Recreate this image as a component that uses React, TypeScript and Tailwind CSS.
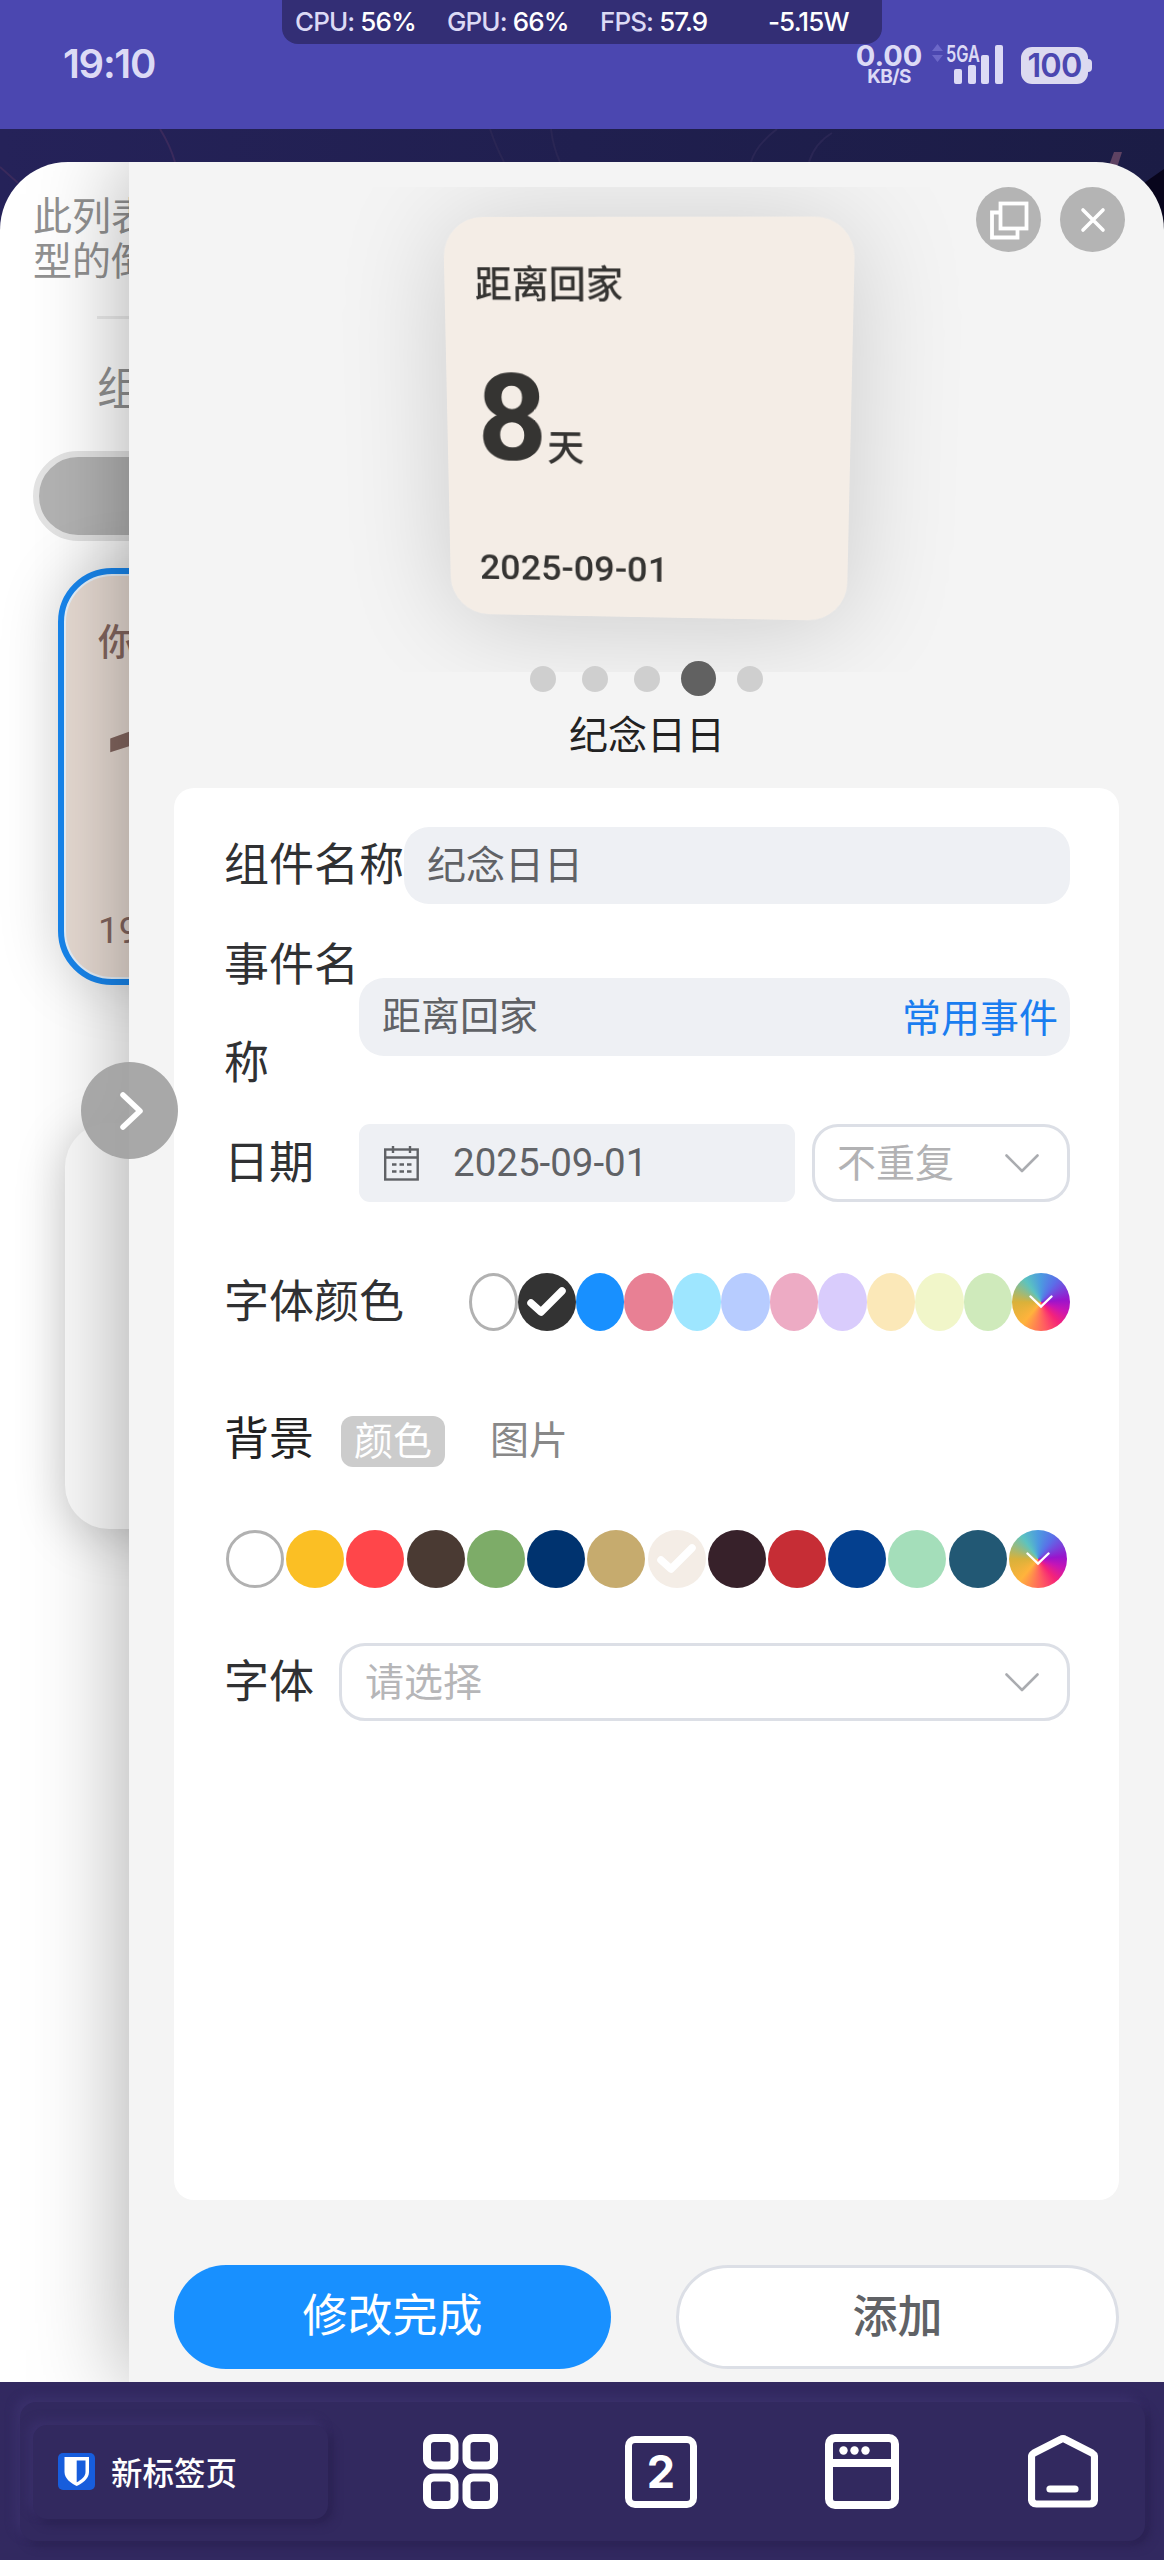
import React from "react";
import clsx from "clsx";

const fontColors = [
  { color: "#ffffff", outlined: true },
  { color: "#333333", checked: true },
  { color: "#1890ff" },
  { color: "#e88094" },
  { color: "#9ee6ff" },
  { color: "#b7ccff" },
  { color: "#edabc4" },
  { color: "#d9ccfc" },
  { color: "#fbe8b8" },
  { color: "#f1f6c9" },
  { color: "#cfeabb" },
];

const backgroundColors = [
  { color: "#ffffff", outlined: true },
  { color: "#fbbf24" },
  { color: "#ff464a" },
  { color: "#4a3a33" },
  { color: "#7dac68" },
  { color: "#00336f" },
  { color: "#c6ab6e" },
  { color: "#f4ede6", checked: true },
  { color: "#37212a" },
  { color: "#c62d35" },
  { color: "#04408f" },
  { color: "#a4deba" },
  { color: "#225874" },
];

interface SwatchProps {
  color: string;
  outlined?: boolean;
  checked?: boolean;
  className?: string;
}

const Swatch: React.FC<SwatchProps> = ({ color, outlined, checked, className }) => (
  <button
    className={clsx(
      "flex h-[58px] items-center justify-center rounded-[50%]",
      outlined && "border-[3px] border-[#b1b1b1]",
      className
    )}
    style={{ backgroundColor: color }}
  >
    {checked && (
      <svg className="h-[32px] w-[42px]" viewBox="0 0 42 32" fill="none">
        <path d="M5 17 L15 26 L36 5" stroke="#fff" strokeWidth="7.5" strokeLinecap="round" strokeLinejoin="round" />
      </svg>
    )}
  </button>
);

const RainbowSwatch: React.FC = () => (
  <button className="flex size-[58px] shrink-0 items-center justify-center rounded-full bg-[conic-gradient(#4c9ae0_0deg,#5b6ee8_35deg,#9a14cc_85deg,#c815b4_110deg,#f52478_140deg,#ff5a62_170deg,#ffb33c_220deg,#d9b13a_270deg,#5cc3c0_325deg,#4c9ae0_360deg)]">
    <svg className="h-[14px] w-[24px]" viewBox="0 0 24 14" fill="none">
      <path d="M1.5 1.5 L12 11.5 L22.5 1.5" stroke="#fff" strokeWidth="2.4" strokeLinecap="round" />
    </svg>
  </button>
);

const SelectArrow: React.FC = () => (
  <svg className="h-[19px] w-[34px]" viewBox="0 0 34 19" fill="none">
    <path d="M1.5 1.5 L17 17 L32.5 1.5" stroke="#aaacb0" strokeWidth="2.6" strokeLinecap="round" strokeLinejoin="round" />
  </svg>
);

const StatusBar: React.FC = () => (
  <div className="relative flex h-[129px] justify-between bg-[#4b47b0] pl-[63px] pr-[72px] font-['Inter'] text-[#dcdaf5]">
    <div className="pt-[40px] text-[40px] font-semibold leading-[48px] tracking-[-1.3px]">19:10</div>

    {/* Performance overlay */}
    <div className="absolute left-[282px] top-0 flex h-[44px] w-[600px] items-center rounded-b-[16px] bg-[#332e75] pb-px pl-[13px] text-[26px] font-medium tracking-[-0.9px]">
      <div className="w-[152px] whitespace-nowrap">CPU: <span className="text-white">56%</span></div>
      <div className="w-[153px] whitespace-nowrap">GPU: <span className="text-white">66%</span></div>
      <div className="w-[168px] whitespace-nowrap">FPS: <span className="text-white">57.9</span></div>
      <div className="whitespace-nowrap text-white">-5.15W</div>
    </div>

    <div className="flex pt-[43px]">
      <div className="-ml-[2px] w-[68px] text-center font-bold">
        <div className="text-[29px] leading-[25px]">0.00</div>
        <div className="text-[19px] leading-[17px] tracking-[-0.6px]">KB/S</div>
      </div>
      <svg className="ml-[9px] mt-[1px] h-[42px] w-[76px]" viewBox="0 0 76 42">
        <path d="M0 7 L5.5 0 L11 7 Z M0 11 L5.5 18 L11 11 Z" fill="#6c68c8" />
        <text x="14" y="17.500" fontSize="23" fontWeight="600" textLength="34" lengthAdjust="spacingAndGlyphs" fill="#dcdaf5">5GA</text>
        <rect x="22" y="25" width="8" height="15" rx="2" fill="#dcdaf5" />
        <rect x="36" y="21" width="8" height="19" rx="2" fill="#dcdaf5" />
        <rect x="49" y="11" width="8" height="29" rx="2" fill="#dcdaf5" />
        <rect x="63" y="1" width="8" height="39" rx="2" fill="#dcdaf5" />
      </svg>
      <div className="ml-[13px] mt-[4px] flex h-[37px] items-center">
        <div className="flex h-[37px] w-[67px] items-center justify-center rounded-[11px] bg-[#dcdaf0] text-[32.5px] font-semibold leading-[37px] tracking-[-0.8px] text-[#4b47b0]">
          100
        </div>
        <div className="h-[13px] w-[4px] rounded-r-[4px] bg-[#dcdaf0]" />
      </div>
    </div>
  </div>
);

const Sidebar: React.FC = () => (
  <div className="w-[129px] shrink-0 overflow-hidden bg-white">
    <div className="w-[420px] text-[#919191]">
      <div className="pl-[33px] pt-[29px] text-[39px] leading-[45px]">
        此列表
        <br />
        型的倒
      </div>
      <div className="ml-[97px] mt-[35px] h-[3px] bg-[#ececec]" />
      <div className="ml-[97px] mt-[34px] h-[65px] text-[45px] leading-[65px]">组</div>
      <div className="ml-[33px] mt-[33px] h-[90px] rounded-full border-[6px] border-[#e4e4e4] bg-[#b3b3b3]" />

      <div className="ml-[58px] mt-[27px] h-[417px] rounded-[54px] border-[6px] border-[#1785ec] bg-[#e5f0fa] p-[2px] shadow-[0_0_60px_rgba(0,0,0,0.17)]">
        <div className="h-full rounded-[46px] bg-[#e6dad2] pl-[32px] pt-[36px] font-medium text-[#83665f]">
          <div className="text-[37px] leading-[56px]">你</div>
          <div className="mt-[29px] h-[150px] pl-[2px] font-['Roboto'] text-[125px] font-bold leading-[150px]">1</div>
          <div className="mt-[56px] font-['Roboto'] text-[37px] font-normal leading-[56px]">19</div>
        </div>
      </div>

      <div className="ml-[65px] mt-[138px] h-[406px] rounded-[44px] bg-[#fafafa] shadow-[0_8px_50px_rgba(0,0,0,0.22)]" />
    </div>
  </div>
);

const Preview: React.FC = () => (
  <div className="relative">
    <div className="mt-[25px] h-[485px] overflow-hidden pl-[314px] pt-[30px]">
      <div className="h-[410px] w-[410px] origin-top-left rounded-[40px] bg-[#f4ede6] pl-[31px] pt-[36px] text-[#353432] shadow-[0_8px_110px_rgba(0,0,0,0.17)] [transform:matrix3d(0.98537,-0.0012,0,-0.0000502,0.02163,1.00951,0,0.0001069,0,0,1,0,0,0,0,1)]">
        <div className="text-[37.5px] font-medium leading-[56px]">距离回家</div>
        <div className="mt-[37px] flex h-[150px] items-baseline leading-[150px]">
          <span className="font-['Roboto'] text-[125px] font-bold">8</span>
          <span className="text-[38px] font-medium">天</span>
        </div>
        <div className="mt-[55px] font-['Roboto'] text-[37.5px] font-medium leading-[50px]">2025-09-01</div>
      </div>
    </div>

    <div className="absolute right-[39px] top-0 flex gap-[19px]">
      <button className="flex size-[65px] items-center justify-center rounded-full bg-[#b4b4b4]">
        <svg className="size-[40px]" viewBox="0 0 40 40" fill="none" stroke="#fff" strokeWidth="3.8">
          <path d="M11.500 12.500 H3 V37.500 H28.500 V29" />
          <rect x="11.500" y="3.500" width="26" height="25" />
        </svg>
      </button>
      <button className="flex size-[65px] items-center justify-center rounded-full bg-[#b4b4b4]">
        <svg className="size-[26px]" viewBox="0 0 26 26" fill="none">
          <path d="M3 3 L23 23 M23 3 L3 23" stroke="#fff" strokeWidth="3.6" strokeLinecap="round" />
        </svg>
      </button>
    </div>

    {/* Pager */}
    <div className="relative -mt-[11px] flex h-[35px] items-center gap-[25.75px] pl-[401px]">
      <span className="size-[26px] rounded-full bg-[#cfcfcf]" />
      <span className="size-[26px] rounded-full bg-[#cfcfcf]" />
      <span className="size-[26px] rounded-full bg-[#cfcfcf]" />
      <span className="-mx-[4.5px] size-[35px] rounded-full bg-[#616161]" />
      <span className="size-[26px] rounded-full bg-[#cfcfcf]" />
    </div>
    <div className="mt-[8px] h-[59px] pl-[440px] text-[39px] leading-[56px] text-[#222]">纪念日日</div>
  </div>
);

const EditForm: React.FC = () => (
  <div className="mx-[45px] mt-[25px] h-[1412px] rounded-[20px] bg-white pl-[50px] pr-[49px] pt-[39px] text-[45px] text-[#303133]">
    <div className="flex h-[77px] items-center">
      <label className="-mt-[8px] w-[180px] whitespace-nowrap leading-[71px]">组件名称</label>
      <div className="h-full flex-1 rounded-[25px] bg-[#eef0f4] pl-[23px] text-[39px] leading-[70px] text-[#606266]">
        纪念日日
      </div>
    </div>

    <div className="mt-[11px] flex h-[203px] items-center">
      <label className="-mt-[12px] w-[135px] leading-[97.5px]">事件名称</label>
      <div className="flex h-[78px] flex-1 justify-between rounded-[25px] bg-[#eef0f4] pl-[23px] pr-[12px] text-[39px] leading-[71px] text-[#606266]">
        <span>距离回家</span>
        <span className="pt-[2px] text-[#1a7df0]">常用事件</span>
      </div>
    </div>

    <div className="mt-[6px] flex h-[78px] items-center">
      <label className="-mt-[6px] w-[135px] leading-[72px]">日期</label>
      <div className="flex h-full w-[436px] items-center rounded-[11px] bg-[#eef0f4] pl-[25px] text-[#606266]">
        <svg className="size-[35px]" viewBox="0 0 35 35" fill="none" stroke="#606266" strokeWidth="2.4">
          <rect x="1.200" y="3.500" width="32.500" height="30" />
          <path d="M1.200 11.500 H33.500 M9 0 V7 M26 0 V7" />
          <path d="M8 18.500 H12.500 M15.500 18.500 H20 M23 18.500 H27.500 M8 25.500 H12.500 M15.500 25.500 H20 M23 25.500 H27.500" />
        </svg>
        <span className="pl-[34px] font-['Roboto'] text-[38.5px]">2025-09-01</span>
      </div>
      <div className="ml-[17px] flex h-full flex-1 items-center justify-between rounded-[26px] border-[3px] border-[#dcdfe6] pl-[22px] pr-[28px] text-[39px] text-[#b2b2b4]">
        <span className="-mt-[7px] leading-[66px]">不重复</span>
        <SelectArrow />
      </div>
    </div>

    <div className="mt-[71px] flex h-[58px] items-center">
      <label className="-mt-[7px] w-[245px] leading-[58px]">字体颜色</label>
      <div className="flex">
        {fontColors.map((item) => (
          <Swatch
            key={item.color}
            {...item}
            className={item.checked ? "w-[58px] shrink-0" : "w-[48.5px] shrink-0"}
          />
        ))}
        <RainbowSwatch />
      </div>
    </div>

    <div className="mt-[85px] flex h-[51px] items-center">
      <label className="-mt-[11px] w-[117px] text-[#222]">背景</label>
      <button className="h-[51px] w-[104px] rounded-[12px] bg-[#ccc] pb-[7px] text-[39px] leading-[44px] text-white">颜色</button>
      <button className="-mt-[9px] ml-[45px] text-[39px] leading-[45px] text-[#888]">图片</button>
    </div>

    <div className="mt-[63px] flex justify-between pl-[2px] pr-[3px]">
      {backgroundColors.map((item) => (
        <Swatch key={item.color} {...item} className="w-[58px]" />
      ))}
      <RainbowSwatch />
    </div>

    <div className="mt-[55px] flex h-[78px] items-center">
      <label className="-mt-[7px] w-[115px] leading-[72px]">字体</label>
      <div className="flex h-full flex-1 items-center justify-between rounded-[26px] border-[3px] border-[#dcdfe6] pl-[23px] pr-[28px] text-[39px] text-[#b6b6b8]">
        <span className="-mt-[6px] leading-[66px]">请选择</span>
        <SelectArrow />
      </div>
    </div>
  </div>
);

const BrowserBar: React.FC = () => (
  <div className="h-[178px] bg-[#322960] pl-[20px] pr-[19px] pt-[20px]">
    <div className="flex h-[139px] items-center rounded-[16px] bg-[#32295f] pl-[13px] shadow-[-5px_-5px_10px_#3a306b,5px_5px_10px_#2b2253]">
      <div className="flex h-[94px] w-[295px] items-center rounded-[14px] bg-[#32295f] pl-[25px] shadow-[-5px_-5px_10px_#392f6a,5px_5px_10px_#2b2253]">
        <svg className="size-[37px]" viewBox="0 0 37 37">
          <rect width="37" height="37" rx="5" fill="#175ddc" />
          <path d="M6.500 4 H31 V19 C31 26 24 30.500 18.700 33 C13.500 30.500 6.500 26 6.500 19 Z" fill="#fff" />
          <path d="M18.700 7.500 H27.500 V19 C27.500 23.500 23 27 18.700 29.300 Z" fill="#175ddc" />
        </svg>
        <span className="-mt-[2px] pl-[16px] text-[31.5px] font-medium leading-[46px] text-white">新标签页</span>
      </div>

      <svg className="ml-[95px] size-[75px]" viewBox="0 0 75 75" fill="none" stroke="#fff" strokeWidth="8">
        <rect x="4" y="4" width="27.500" height="27.500" rx="7" />
        <rect x="43.500" y="4" width="27.500" height="27.500" rx="7" />
        <rect x="4" y="43.500" width="27.500" height="27.500" rx="7" />
        <rect x="43.500" y="43.500" width="27.500" height="27.500" rx="7" />
      </svg>
      <div className="ml-[127px] flex size-[72px] items-center justify-center rounded-[10px] border-[7px] border-white font-['Inter'] text-[45px] font-bold leading-none text-white">
        2
      </div>
      <svg className="ml-[128px] h-[75px] w-[74px]" viewBox="0 0 74 75" fill="none" stroke="#fff" strokeWidth="8">
        <rect x="4" y="4" width="66" height="67" rx="6" />
        <path d="M4 29 H70" />
        <g fill="#fff" stroke="none">
          <circle cx="18.500" cy="16.500" r="4.200" />
          <circle cx="29.500" cy="16.500" r="4.200" />
          <circle cx="40.500" cy="16.500" r="4.200" />
        </g>
      </svg>
      <svg className="ml-[129px] h-[73px] w-[70px]" viewBox="0 0 70 73" fill="none" stroke="#fff" strokeWidth="7.200" strokeLinejoin="round">
        <path d="M3.500 22 Q3.500 19.500 6 18 L32.500 4.500 Q35 3 37.500 4.500 L64 18 Q66.500 19.500 66.500 22 V64 Q66.500 69 61.500 69 H8.500 Q3.500 69 3.500 64 Z" />
        <path d="M22 54 H47" strokeLinecap="round" />
      </svg>
    </div>
  </div>
);

const App: React.FC = () => (
  <div className="flex h-[2560px] w-[1164px] flex-col overflow-hidden font-['Noto_Sans_CJK_SC',sans-serif]">
    <StatusBar />

    <div className="relative flex-1 bg-linear-to-r from-[#252259] to-[#1b1c45] pt-[33px]">
      {/* Wallpaper behind the sheet */}
      <svg className="absolute left-0 top-0 h-[110px] w-[1164px]" viewBox="0 0 1164 110" fill="none">
        <path d="M1164 40 L1144 54 V110 H1164 Z" fill="#08051c" />
        <path d="M1104 50 L1114 23 L1122 23 L1114 48 Z" fill="#5e4262" />
        <path d="M160 0 Q170 16 175 33 M0 38 L18 54" stroke="#3a2a5c" strokeWidth="2" />
        <path d="M490 0 Q496 18 504 33 M551 0 Q553 18 560 33 M777 0 Q756 16 751 33 M832 4 Q815 14 809 33" stroke="#2a2654" strokeWidth="2" />
      </svg>

      <div className="relative flex h-[2220px] overflow-hidden rounded-t-[68px]">
        <Sidebar />
        <div className="relative z-10 flex-1 bg-[#f4f4f4] shadow-[0_0_90px_rgba(0,0,0,0.34)]">
          <Preview />
          <EditForm />
          <div className="mx-[45px] mt-[65px] flex justify-between text-[45px] leading-[92px]">
            <button className="h-[104px] w-[437px] rounded-full bg-[#1890ff] pb-[8px] text-white">修改完成</button>
            <button className="h-[104px] w-[443px] rounded-full border-[3px] border-[#dcdfe6] bg-white pb-[8px] font-medium text-[#606266]">
              添加
            </button>
          </div>
        </div>

        {/* Drawer toggle */}
        <button className="absolute left-[81px] top-[900px] z-20 flex size-[97px] items-center justify-center rounded-full bg-[#a0a0a0]/90">
          <svg className="ml-[5px] h-[40px] w-[26px]" viewBox="0 0 26 40" fill="none">
            <path d="M4 4 L21 20 L4 36" stroke="#fff" strokeWidth="5.500" strokeLinecap="round" strokeLinejoin="round" />
          </svg>
        </button>
      </div>
    </div>

    <BrowserBar />
  </div>
);

export default App;
